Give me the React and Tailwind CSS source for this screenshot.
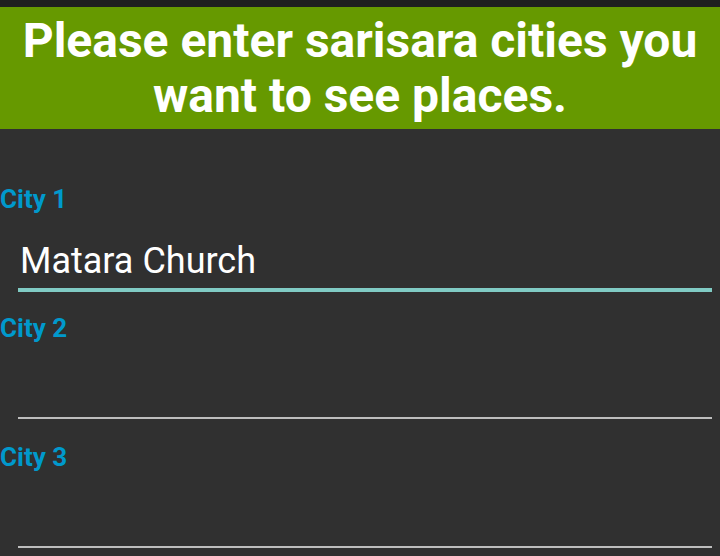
import { useState } from 'react'

const Field = ({ label, value, onChange, focused }) => {
  return (
    <div className="h-[129px]">
      <div className="text-[26px] leading-[28px] font-bold text-[#0099cc]">{label}</div>
      <div className="ml-[18px] mr-[8px]">
        <input
          type="text"
          value={value}
          onChange={(e) => onChange(e.target.value)}
          className={
            focused
              ? 'w-full h-[79px] pt-[20px] px-[2px] bg-transparent text-white text-[36px] outline-none border-b-4 border-[#80cbc4]'
              : 'w-full h-[77px] pt-[20px] px-[2px] bg-transparent text-white text-[36px] outline-none border-b-2 border-[#bdbdbd]'
          }
        />
      </div>
    </div>
  )
}

export default function App() {
  const [cities, setCities] = useState(['Matara Church', '', ''])

  const setCity = (i, v) => {
    const next = [...cities]
    next[i] = v
    setCities(next)
  }

  return (
    <div className="w-[720px] h-[556px] overflow-hidden bg-[#303030] font-['Roboto',sans-serif]">
      <div className="h-[7px] bg-[#1f1f1f]"></div>
      <div className="h-[122px] bg-[#669900] flex items-center justify-center">
        <h1 className="text-white font-bold text-[48px] leading-[55px] text-center whitespace-nowrap">
          Please enter sarisara cities you<br />want to see places.
        </h1>
      </div>
      <div className="pt-[56px]">
        {cities.map((c, i) => (
          <Field
            key={i}
            label={`City ${i + 1}`}
            value={c}
            onChange={(v) => setCity(i, v)}
            focused={i === 0}
          />
        ))}
      </div>
    </div>
  )
}
